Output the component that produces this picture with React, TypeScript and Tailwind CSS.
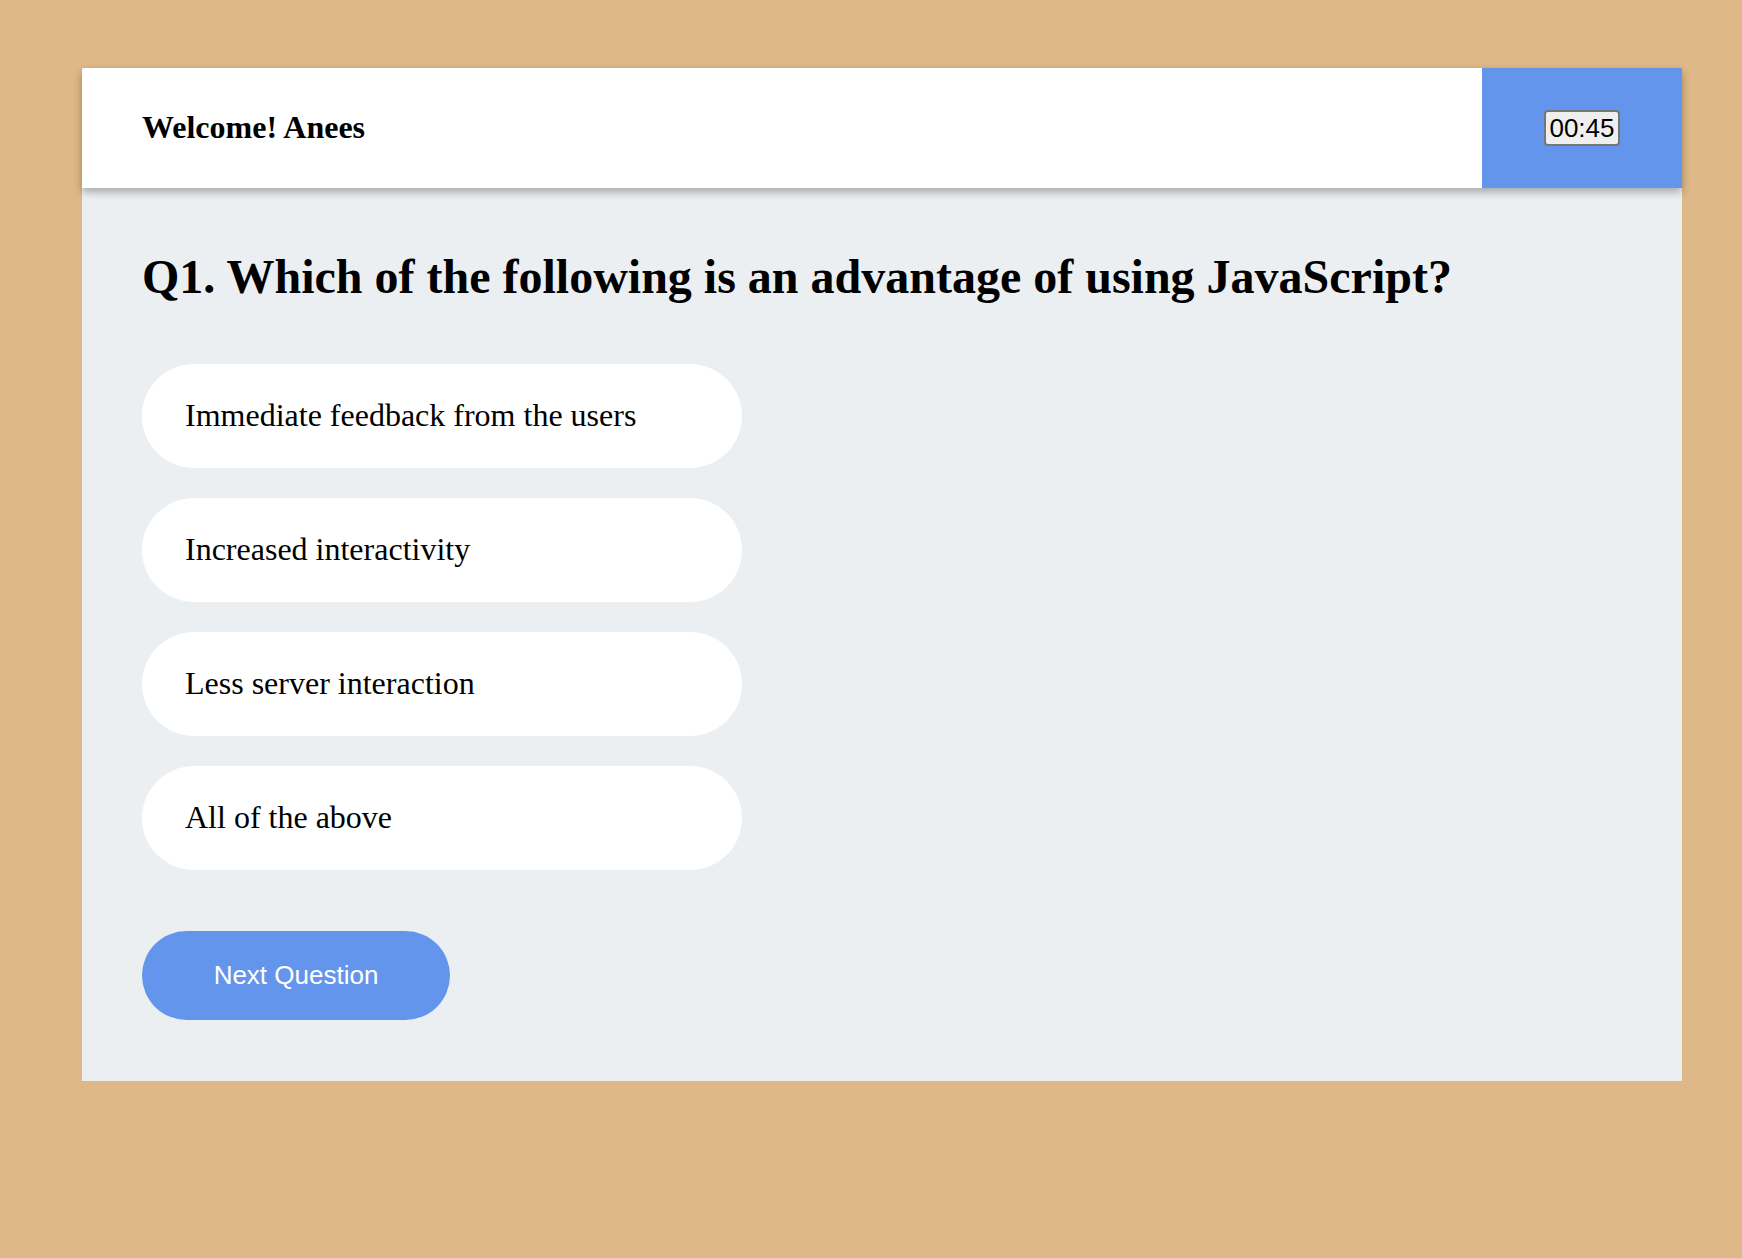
import React from "react";

const OPTIONS = [
  "Immediate feedback from the users",
  "Increased interactivity",
  "Less server interaction",
  "All of the above",
];

export default function App() {
  return (
    <div className="min-h-screen w-full bg-[#deb887] pt-[68px] pl-[82px]">
      <div className="w-[1600px] bg-[#eceff1]">
        {/* Header */}
        <header className="flex h-[120px] rounded-tl-[4px] bg-white shadow-[0_4px_8px_rgba(0,0,0,0.3)]">
          <div className="flex flex-1 items-center pl-[60px] pb-[2px]">
            <h1 className="font-['Liberation_Serif',serif] text-[32px] font-bold text-black">
              Welcome! Anees
            </h1>
          </div>
          <div className="flex w-[200px] items-center justify-center bg-[#6495ed]">
            <span className="rounded-[4px] border-2 border-[#767676] bg-[#efefef] px-[3px] font-['Liberation_Sans',sans-serif] text-[26px] leading-[32px] text-black">
              00:45
            </span>
          </div>
        </header>

        {/* Question body */}
        <main className="px-[60px] pt-[61px] pb-[61px]">
          <h2 className="font-['Liberation_Serif',serif] text-[48px] font-bold leading-[56px] text-black">
            Q1. Which of the following is an advantage of using JavaScript?
          </h2>

          <div className="mt-[59px] flex flex-col gap-[30px]">
            {OPTIONS.map((opt) => (
              <button
                key={opt}
                className="flex h-[104px] w-[600px] items-center rounded-full bg-white pl-[43px] pb-[2px] text-left font-['Liberation_Serif',serif] text-[32px] text-black"
              >
                {opt}
              </button>
            ))}
          </div>

          <button className="mt-[61px] flex h-[89px] w-[308px] items-center justify-center rounded-full bg-[#6495ed] font-['Liberation_Sans',sans-serif] text-[26px] text-white">
            Next Question
          </button>
        </main>
      </div>
    </div>
  );
}
